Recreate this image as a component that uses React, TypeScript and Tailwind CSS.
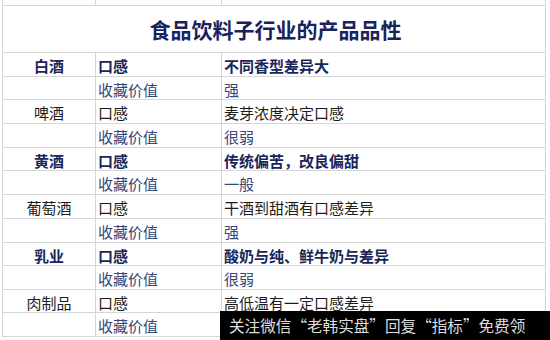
const rows: { name: string; item: string; value: string; kind: "bold" | "black" | "blue"; h: string }[] = [
  { name: "白酒", item: "口感", value: "不同香型差异大", kind: "bold", h: "h-[24px]" },
  { name: "", item: "收藏价值", value: "强", kind: "blue", h: "h-[23px]" },
  { name: "啤酒", item: "口感", value: "麦芽浓度决定口感", kind: "black", h: "h-[24px]" },
  { name: "", item: "收藏价值", value: "很弱", kind: "blue", h: "h-[24px]" },
  { name: "黄酒", item: "口感", value: "传统偏苦，改良偏甜", kind: "bold", h: "h-[23px]" },
  { name: "", item: "收藏价值", value: "一般", kind: "blue", h: "h-[24px]" },
  { name: "葡萄酒", item: "口感", value: "干酒到甜酒有口感差异", kind: "black", h: "h-[24px]" },
  { name: "", item: "收藏价值", value: "强", kind: "blue", h: "h-[24px]" },
  { name: "乳业", item: "口感", value: "酸奶与纯、鲜牛奶与差异", kind: "bold", h: "h-[23px]" },
  { name: "", item: "收藏价值", value: "很弱", kind: "blue", h: "h-[24px]" },
  { name: "肉制品", item: "口感", value: "高低温有一定口感差异", kind: "black", h: "h-[23px]" },
  { name: "", item: "收藏价值", value: "", kind: "blue", h: "h-[24px]" },
];

const kindClass = {
  bold: "font-bold text-[#1a2659]",
  black: "text-[#1c1c1c]",
  blue: "text-[#34467a]",
};

export default function App() {
  return (
    <div className="relative w-[550px] h-[340px] bg-white overflow-hidden font-['Noto_Sans_CJK_SC','Microsoft_YaHei',sans-serif] text-[15px] leading-none">
      <div className="ml-[2px] w-[544px] border-x border-[#d6d6d6]">
        {/* top partial row */}
        <div className="flex h-[6px] border-b border-[#d6d6d6]">
          <div className="w-[93px] border-r border-[#d6d6d6]" />
          <div className="w-[126px] border-r border-[#d6d6d6]" />
          <div className="flex-1" />
        </div>
        {/* title */}
        <div className="flex h-[47px] items-center justify-center border-b border-[#d6d6d6] pl-[3px] pt-[1px]">
          <span className="text-[21px] font-bold text-[#17235a]">食品饮料子行业的产品品性</span>
        </div>
        {rows.map((r, i) => (
          <div key={i} className={`flex ${r.h} border-b border-[#d6d6d6] ${kindClass[r.kind]}`}>
            <div className="w-[93px] border-r border-[#d6d6d6] flex items-center justify-center pt-[2px]">
              {r.name}
            </div>
            <div className="w-[126px] border-r border-[#d6d6d6] flex items-center pl-[2px] pt-[2px]">
              {r.item}
            </div>
            <div className="flex-1 flex items-center pl-[2px] pt-[2px]">{r.value}</div>
          </div>
        ))}
      </div>
      <div className="absolute left-[220px] top-[311px] w-[330px] h-[29px] bg-black flex items-center pl-[9px] text-[15.6px] text-[#dedede] font-['Noto_Sans_CJK_SC',sans-serif] whitespace-nowrap">
        关注微信“老韩实盘”回复“指标”免费领
      </div>
    </div>
  );
}
